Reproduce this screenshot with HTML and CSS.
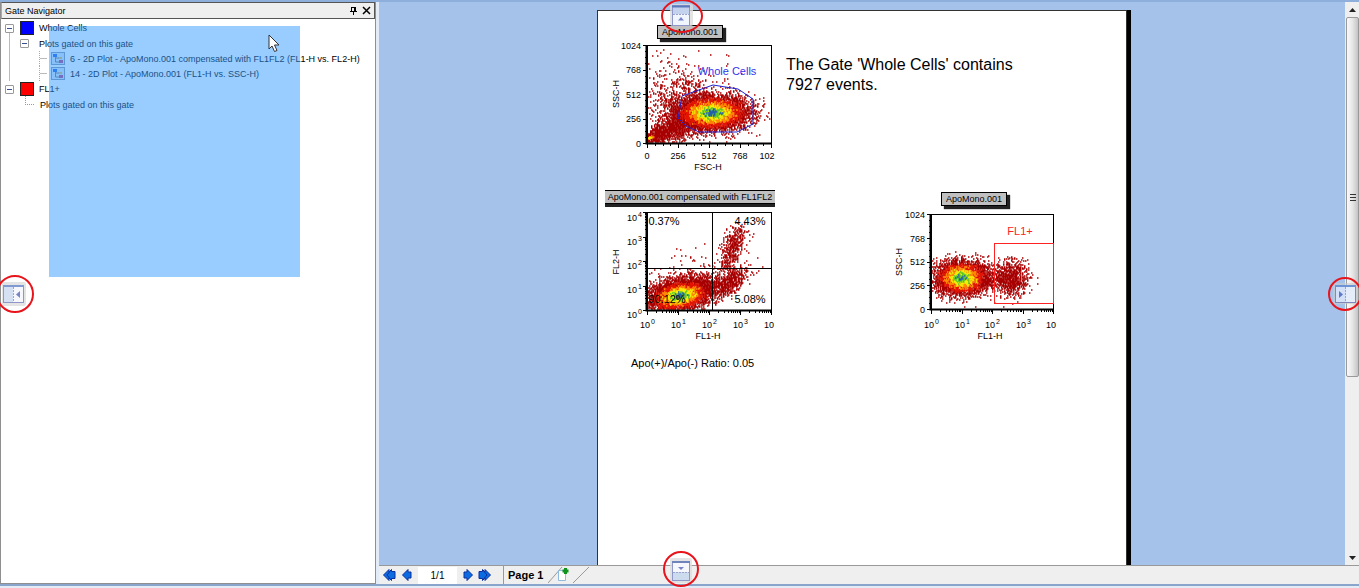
FILE: index.html
```html
<!DOCTYPE html>
<html lang="en">

<head>
    <meta charset="UTF-8">
    <meta name="viewport" content="width=device-width, initial-scale=1.0">
    <title>Gate Navigator</title>
    <link rel="stylesheet" href="styles.css">
</head>

<body>
    <div class="window">
        <div class="main">
            <aside class="navigator">
                <header class="caption">
                    <h1>Gate Navigator</h1>
                    <button aria-label="Auto hide">
                        <svg width="9" height="10" viewBox="0 0 9 10"><path d="M2.5 1v4M2 1.5h5M5.5 1v4M6.5 1v4M1 5.5h7M4.5 6v3" fill="none" stroke="#000"/></svg>
                    </button>
                    <button aria-label="Close">
                        <svg width="9" height="9" viewBox="0 0 9 9"><path d="M1 1l7 7M8 1L1 8" stroke="#000" stroke-width="1.5"/></svg>
                    </button>
                </header>
                <ul class="tree">
                    <li>
                        <div class="row gate"><button class="expander" aria-label="Collapse Whole Cells"></button><i class="swatch blue"></i>Whole Cells</div>
                        <ul>
                            <li>
                                <div class="row"><button class="expander" aria-label="Collapse plots"></button>Plots gated on this gate</div>
                                <ul class="plots">
                                    <li class="row"><svg class="plot-icon" viewBox="0 0 14 13"><use href="#plot-icon"/></svg>6 - 2D Plot - ApoMono.001 compensated with FL1FL2 (FL1-H vs. FL2-H)</li>
                                    <li class="row"><svg class="plot-icon" viewBox="0 0 14 13"><use href="#plot-icon"/></svg>14 - 2D Plot - ApoMono.001 (FL1-H vs. SSC-H)</li>
                                </ul>
                            </li>
                        </ul>
                    </li>
                    <li>
                        <div class="row gate"><button class="expander" aria-label="Collapse FL1+"></button><i class="swatch red"></i>FL1+</div>
                        <ul>
                            <li class="row leaf">Plots gated on this gate</li>
                        </ul>
                    </li>
                </ul>
            </aside>

            <main class="workspace">
                <div class="view">
                    <div class="canvas">
                        <article class="page">
                            <figure>
                                <figcaption class="tag">ApoMono.001</figcaption>
                                <svg class="plot" id="plot-ssc" width="170" height="134" viewBox="0 0 170 134">
                                    <g class="dots"></g>
                                    <rect class="frame" x="42" y="4" width="124" height="98"/>
                                    <path class="axis" d="M41.5 4v98.5H166"/>
                                    <path class="ticks"/>
                                    <path class="gate-blue" d="M77 55L108 44L133 48L148 58V83L132 91H94L81 85L73 77Z"/>
                                    <text class="label blue-text" x="122" y="34">Whole Cells</text>
                                    <g class="y-labels">
                                        <text x="36" y="8">1024</text>
                                        <text x="36" y="32">768</text>
                                        <text x="36" y="57">512</text>
                                        <text x="36" y="81">256</text>
                                        <text x="36" y="106">0</text>
                                    </g>
                                    <g class="x-labels">
                                        <text x="42" y="118">0</text>
                                        <text x="73" y="118">256</text>
                                        <text x="104" y="118">512</text>
                                        <text x="135" y="118">768</text>
                                        <text x="162" y="118">102</text>
                                        <text x="103" y="129">FSC-H</text>
                                        <text transform="translate(14 53) rotate(-90)">SSC-H</text>
                                    </g>
                                </svg>
                            </figure>

                            <p class="gate-note">The Gate 'Whole Cells' contains 7927 events.</p>

                            <figure>
                                <figcaption class="tag wide">ApoMono.001 compensated with FL1FL2</figcaption>
                                <svg class="plot" id="plot-fl" width="170" height="136" viewBox="0 0 170 136">
                                    <g class="dots"></g>
                                    <rect class="frame" x="42" y="6" width="124" height="98"/>
                                    <path class="axis" d="M41.5 6v98.5H166"/>
                                    <path class="ticks"/>
                                    <path class="quadrants" d="M107 6v98M42 62.5h124"/>
                                    <text class="label" x="59" y="19">0.37%</text>
                                    <text class="label" x="145" y="19">4.43%</text>
                                    <text class="label" x="62" y="97">90.12%</text>
                                    <text class="label" x="145" y="97">5.08%</text>
                                    <g class="y-labels">
                                        <text x="32" y="15">10</text><text class="sup" x="37" y="11">4</text>
                                        <text x="32" y="39">10</text><text class="sup" x="37" y="35">3</text>
                                        <text x="32" y="63">10</text><text class="sup" x="37" y="59">2</text>
                                        <text x="32" y="87">10</text><text class="sup" x="37" y="83">1</text>
                                        <text x="32" y="112">10</text><text class="sup" x="37" y="108">0</text>
                                    </g>
                                    <g class="x-labels">
                                        <text x="40" y="122">10</text><text class="sup" x="48" y="118">0</text>
                                        <text x="71" y="122">10</text><text class="sup" x="79" y="118">1</text>
                                        <text x="102" y="122">10</text><text class="sup" x="110" y="118">2</text>
                                        <text x="133" y="122">10</text><text class="sup" x="141" y="118">3</text>
                                        <text x="164" y="122">10</text>
                                        <text x="103" y="133">FL1-H</text>
                                        <text transform="translate(14 56) rotate(-90)">FL2-H</text>
                                    </g>
                                </svg>
                            </figure>

                            <figure class="second">
                                <figcaption class="tag">ApoMono.001</figcaption>
                                <svg class="plot" id="plot-fl1" width="170" height="134" viewBox="0 2 170 134">
                                    <g class="dots"></g>
                                    <rect class="frame" x="42" y="8" width="122" height="95"/>
                                    <path class="axis" d="M41.5 8v95.5H165"/>
                                    <path class="ticks"/>
                                    <rect class="gate-red" x="105" y="37" width="59" height="60"/>
                                    <text class="label red-text" x="131" y="29">FL1+</text>
                                    <g class="y-labels">
                                        <text x="36" y="12">1024</text>
                                        <text x="36" y="36">768</text>
                                        <text x="36" y="59">512</text>
                                        <text x="36" y="83">256</text>
                                        <text x="36" y="107">0</text>
                                    </g>
                                    <g class="x-labels">
                                        <text x="40" y="122">10</text><text class="sup" x="48" y="118">0</text>
                                        <text x="71" y="122">10</text><text class="sup" x="79" y="118">1</text>
                                        <text x="101" y="122">10</text><text class="sup" x="109" y="118">2</text>
                                        <text x="132" y="122">10</text><text class="sup" x="140" y="118">3</text>
                                        <text x="162" y="122">10</text>
                                        <text x="101" y="133">FL1-H</text>
                                        <text transform="translate(13 56) rotate(-90)">SSC-H</text>
                                    </g>
                                </svg>
                            </figure>

                            <p class="ratio">Apo(+)/Apo(-) Ratio: 0.05</p>
                        </article>
                    </div>
                    <div class="scrollbar">
                        <button aria-label="Scroll up"><svg width="7" height="4" viewBox="0 0 7 4"><path d="M0 4L3.5 0L7 4Z" fill="#222"/></svg></button>
                        <div class="thumb"><svg width="6" height="8" viewBox="0 0 6 8"><path d="M0 1.5h6M0 4.5h6M0 7.5h6" stroke="#333"/></svg></div>
                        <button class="down" aria-label="Scroll down"><svg width="7" height="4" viewBox="0 0 7 4"><path d="M0 0h7L3.5 4Z" fill="#222"/></svg></button>
                    </div>
                </div>

                <nav class="pager">
                    <button aria-label="First page"><svg width="13" height="12" viewBox="0 0 13 12"><path d="M.5 6L6 .5V3L8.500 .5V2.500H12V9.500H8.500V11.500L6 9V11.500Z" fill="#0c6be0" stroke="#0a2f9e"/><path d="M7 2.500L4 6L7 9.500" fill="none" stroke="#0a2f9e"/></svg></button>
                    <button aria-label="Previous page"><svg width="10" height="12" viewBox="0 0 10 12"><path d="M.5 6L6 .5V3H9V9H6V11.500Z" fill="#0c6be0" stroke="#0a2f9e"/></svg></button>
                    <input type="text" value="1/1" aria-label="Page number">
                    <button aria-label="Next page"><svg width="10" height="12" viewBox="0 0 10 12"><path d="M9.500 6L4 .5V3H1V9H4V11.500Z" fill="#0c6be0" stroke="#0a2f9e"/></svg></button>
                    <button aria-label="Last page"><svg width="13" height="12" viewBox="0 0 13 12"><path d="M12.500 6L7 .5V3L4.500 .5V2.500H1V9.500H4.500V11.500L7 9V11.500Z" fill="#0c6be0" stroke="#0a2f9e"/><path d="M6 2.500L9 6L6 9.500" fill="none" stroke="#0a2f9e"/></svg></button>
                    <button class="tab">Page 1</button>
                    <button class="new-page" aria-label="New page">
                        <svg width="44" height="18" viewBox="0 0 44 18">
                            <path d="M0 17L14 1M25 17L41 1" fill="none" stroke="#9a9a9a"/>
                            <path d="M10.500 4.500h7v10h-7z" fill="#fff" stroke="#8fbbe0"/>
                            <path d="M17.500 2v6M14.500 5h6" stroke="#10931c" stroke-width="3"/>
                        </svg>
                    </button>
                </nav>
            </main>
        </div>
        <footer class="status"></footer>

        <div class="drag-area"></div>
        <svg class="cursor" width="12" height="19" viewBox="0 0 12 19"><path d="M1 1V15L4 12L6.500 17.500L9 16.500L6.500 11H11Z" fill="#fff" stroke="#333"/></svg>

        <svg class="dock dock-top" width="44" height="36" viewBox="0 0 44 36">
            <rect x="10" y="5" width="23" height="22" rx="2" fill="#ddd" opacity=".8"/>
            <rect x="12.500" y="6.500" width="17" height="20" fill="#f1f5fd" stroke="#8f96c8"/>
            <path d="M13 7h16v8H13z" fill="#c5d2ee"/><path d="M12 7.500h18" stroke="#5b79bd" stroke-width="2"/>
            <path d="M13 15.500h16" stroke="#9aa4cd" stroke-dasharray="2 1"/>
            <path d="M18 21.500L21 18L24 21.500Z" fill="#7886c9"/>
            <ellipse cx="22" cy="17" rx="20" ry="16"/>
        </svg>
        <svg class="dock dock-left" width="40" height="40" viewBox="0 0 40 40">
            <rect x="7" y="8" width="24" height="24" rx="2" fill="#ddd" opacity=".8"/>
            <rect x="8.500" y="11.500" width="20" height="17" fill="#f6f8fd" stroke="#8f96c8"/>
            <path d="M9 12h9v16H9z" fill="#d5e0f3"/><path d="M8 12h21" stroke="#7f9bd2" stroke-width="2"/>
            <path d="M18.500 13v15" stroke="#9aa4cd" stroke-dasharray="2 1"/>
            <path d="M25 17V24L21 20.500Z" fill="#7886c9"/>
            <circle cx="20" cy="20" r="18"/>
        </svg>
        <svg class="dock dock-right" width="36" height="36" viewBox="0 0 36 36">
            <rect x="6" y="7" width="23" height="21" rx="2" fill="#ccc" opacity=".6"/>
            <rect x="8.500" y="9.500" width="20" height="17" fill="#d3e0f7" stroke="#8087bd"/>
            <path d="M19 10h9v16h-9z" fill="#e4edf9"/><path d="M8 10h21" stroke="#6f94d5" stroke-width="2"/>
            <path d="M18.500 11v15" stroke="#9aa4cd" stroke-dasharray="2 1"/>
            <path d="M12 15V22L16 18.500Z" fill="#5f76c9"/>
            <circle cx="18" cy="18" r="16"/>
        </svg>
        <svg class="dock dock-bottom" width="38" height="38" viewBox="0 0 38 38">
            <rect x="8" y="8" width="22" height="25" rx="2" fill="#ddd" opacity=".8"/>
            <rect x="10.500" y="11.500" width="17" height="19" fill="#f6f8fd" stroke="#8f96c8"/>
            <path d="M11 22h16v8H11z" fill="#cddbef"/><path d="M10 12h18" stroke="#6f83bd" stroke-width="2"/>
            <path d="M11 22.500h16" stroke="#9aa4cd" stroke-dasharray="2 1"/>
            <path d="M16 17h6L19 20Z" fill="#7886c9"/>
            <circle cx="19" cy="19" r="17"/>
        </svg>
    </div>

    <svg class="defs" width="0" height="0" aria-hidden="true">
        <symbol id="plot-icon" viewBox="0 0 14 13">
            <rect x=".5" y=".5" width="13" height="12" fill="#dce6f4" stroke="#8797ad"/>
            <path d="M4.500 4v6H8M4.500 6H8" fill="none" stroke="#777"/>
            <path d="M2 2h4v3H2z" fill="#2966e0"/>
            <path d="M8 5h3v2H8z" fill="#e2c044"/>
            <path d="M8 8h4v3H8z" fill="#b8447f"/>
        </symbol>
    </svg>

    <script src="plots.js"></script>
</body>

</html>
```
FILE: styles.css
```css
* {
    box-sizing: border-box;
}

body {
    margin: 0;
    font-family: "Liberation Sans", Arial, sans-serif;
    font-size: 11px;
    color: #000;
}

button {
    display: flex;
    align-items: center;
    justify-content: center;
    padding: 0;
    border: 0;
    background: none;
}

ul {
    list-style: none;
    margin: 0;
    padding: 0;
}

.window {
    position: relative;
    display: flex;
    flex-direction: column;
    height: 100vh;
    overflow: hidden;
    padding-top: 2px;
    background: linear-gradient(#8eafdc, #8eafdc) top / 100% 2px no-repeat #e3ebf7;
}

.main {
    flex: 1;
    display: flex;
    gap: 3px;
    min-height: 0;
}

/* Gate navigator */

.navigator {
    flex: 0 0 376px;
    min-width: 0;
    border: 1px solid #8f8f8f;
    border-top: 0;
    background: #fff;
    font-size: 9px;
}

.caption {
    display: flex;
    align-items: center;
    gap: 4px;
    height: 17px;
    padding: 0 3px;
    border: 1px solid #555;
    border-left-color: #aaa;
    background: #efefef;
}

.caption h1 {
    flex: 1;
    margin: 0;
    font-size: 9px;
    font-weight: normal;
}

.tree {
    padding: 1px 0 0 3px;
}

.tree ul {
    padding-left: 16px;
}

.tree ul.plots {
    padding-left: 18px;
    margin-left: 12px;
}

.row {
    display: flex;
    align-items: center;
    height: 15px;
    padding-left: 3px;
    white-space: nowrap;
}

.row.gate {
    height: 16px;
    padding-left: 1px;
}

.tree ul .row {
    padding-left: 0;
}

.tree > li:first-child {
    background: linear-gradient(#bbb, #bbb) 5px 12px / 1px 100% no-repeat;
}

.expander {
    width: 9px;
    height: 9px;
    margin-right: 10px;
    border: 1px solid #999;
    border-radius: 1px;
    background: linear-gradient(#35508c, #35508c) center / 5px 1px no-repeat #fff;
}

.row.gate .expander {
    margin-right: 6px;
}

.swatch {
    width: 14px;
    height: 14px;
    margin-right: 5px;
    border: 1px solid #222;
}

.swatch.blue {
    background: #00f;
}

.swatch.red {
    background: #f00;
}

.plots .row::before {
    content: "";
    width: 7px;
    height: 15px;
    margin: 0 4px 0 -11px;
    border-left: 1px dotted #aaa;
    background: linear-gradient(#bbb, #bbb) center / 100% 1px no-repeat;
}

.plot-icon {
    width: 14px;
    height: 13px;
    margin-right: 5px;
}

.leaf::before {
    content: "";
    width: 8px;
    height: 8px;
    margin: 0 6px 8px 5px;
    border-left: 1px dotted #999;
    border-bottom: 1px dotted #999;
}

/* Report page */

.workspace {
    flex: 1;
    display: flex;
    flex-direction: column;
    min-width: 0;
}

.view {
    flex: 1;
    display: flex;
    min-height: 0;
}

.canvas {
    flex: 1;
    display: flex;
    justify-content: center;
    overflow: hidden;
    padding-top: 8px;
    background: #a4c2ea;
}

.page {
    display: grid;
    grid-template-columns: 181px 103px 1fr;
    align-content: start;
    row-gap: 15px;
    width: 530px;
    padding: 14px 0 0 7px;
    border: 1px solid #333;
    border-bottom: 0;
    background: #fff;
    box-shadow: 4px 0 #000;
}

figure {
    display: flex;
    flex-direction: column;
    align-items: center;
    justify-content: flex-end;
    gap: 2px;
    width: 170px;
    margin: 0;
}

.second {
    grid-column: 3;
}

.tag {
    height: 14px;
    padding: 0 4px;
    border: 1px solid #000;
    background: #c0c0c0;
    box-shadow: 3px 3px 1px #222;
    font-size: 9px;
    line-height: 12px;
    white-space: nowrap;
}

.tag.wide {
    width: 100%;
    padding: 0;
    border-width: 1px 0;
    box-shadow: 0 3px #222;
    text-align: center;
}

.gate-note {
    grid-column: 2 / 4;
    max-width: 240px;
    margin: 0;
    padding-top: 30px;
    font-size: 16px;
    line-height: 20px;
}

.ratio {
    grid-column: 1;
    margin: 0;
    padding-left: 26px;
    line-height: 13px;
    white-space: nowrap;
}

.plot {
    display: block;
    font-size: 9px;
}

.frame,
.gate-blue,
.gate-red,
.axis,
.ticks,
.quadrants {
    fill: none;
    stroke: #000;
}

.frame,
.ticks,
.quadrants,
.gate-red {
    shape-rendering: crispEdges;
}

.axis {
    stroke-width: 2px;
}

.gate-blue {
    stroke: #22c;
}

.gate-red {
    stroke: #f22;
}

.label {
    font-size: 11px;
    text-anchor: middle;
}

.blue-text {
    fill: #33e;
}

.red-text {
    fill: #f22;
}

.y-labels {
    text-anchor: end;
}

.x-labels {
    text-anchor: middle;
}

.sup {
    font-size: 7px;
}

.scrollbar {
    display: flex;
    flex-direction: column;
    width: 14px;
    background: #efefef;
}

.scrollbar button {
    height: 15px;
}

.scrollbar .down {
    margin-top: auto;
}

.thumb {
    display: flex;
    align-items: center;
    justify-content: center;
    flex: 0 0 64%;
    margin-left: 1px;
    border: 1px solid #999;
    border-radius: 2px;
    background: linear-gradient(90deg, #fafafa, #e6e6e6 50%, #c4c4c8);
}

/* Page navigation */

.pager {
    display: flex;
    align-items: center;
    height: 19px;
    padding-left: 4px;
    border-top: 1px solid #999;
    background: #efefef;
}

.pager button {
    flex: none;
    min-width: 13px;
    margin-right: 4px;
}

.pager input {
    width: 39px;
    height: 17px;
    margin: 0 4px 0 1px;
    padding: 0;
    border: 0;
    background: #fff;
    font: 10px "Liberation Sans", Arial, sans-serif;
    text-align: center;
}

.pager .tab {
    height: 18px;
    margin: 0 0 0 8px;
    padding: 0 5px 0 4px;
    border-left: 1px solid #999;
    font: bold 11px "Liberation Sans", Arial, sans-serif;
}

.status {
    height: 4px;
    border-top: 2px solid #8aa5cb;
}

/* Docking overlay */

.drag-area {
    position: absolute;
    left: 49px;
    top: 26px;
    width: 251px;
    height: 251px;
    background: rgba(51, 153, 255, 0.5);
}

.cursor {
    position: absolute;
    left: 268px;
    top: 34px;
}

.dock {
    position: absolute;
}

.dock circle,
.dock ellipse {
    fill: none;
    stroke: #e8141c;
    stroke-width: 2px;
}

.dock-top {
    left: 50%;
    top: -1px;
    margin-left: -20px;
}

.dock-left {
    left: -5px;
    top: 50%;
    margin-top: -20px;
}

.dock-right {
    right: -4px;
    top: 50%;
    margin-top: -18px;
}

.dock-bottom {
    left: 50%;
    bottom: 0;
    margin-left: -18px;
}

.defs {
    display: none;
}
```
FILE: plots.js
```js
let seed = 7;

function rand() {
    seed = (seed * 16807) % 2147483647;
    return seed / 2147483647;
}

function gauss() {
    return Math.sqrt(-2 * Math.log(rand() || 0.5)) * Math.cos(2 * Math.PI * rand());
}

const colors = ["#a80000", "#e41400", "#ff8a00", "#f4f000", "#58c828", "#2060a8"];
// distance from the cluster centre where each colour starts
const limits = [1.7, 1.2, 0.85, 0.5, 0.25];

function level(r) {
    const d = r + gauss() * 0.2;
    let n = 0;
    while (n < limits.length && d < limits[n]) n++;
    return n;
}

// top is the hottest colour a cluster can reach
function drawDots(id, box, clusters) {
    const cells = new Map();
    clusters.forEach(c => {
        for (let i = 0; i < c.n; i++) {
            const a = gauss();
            const b = gauss();
            const x = Math.round(c.x + a * c.sx);
            const y = Math.round(c.y + b * c.sy + a * c.tilt);
            if (x < box[0] || x > box[2] || y < box[1] || y > box[3]) continue;
            cells.set(`${x} ${y}`, c.top ? Math.min(c.top, level(Math.hypot(a, b))) : 0);
        }
    });
    const paths = colors.map(() => "");
    cells.forEach((n, at) => {
        paths[n] += `M${at}h1.5`;
    });
    const group = document.querySelector(`#${id} .dots`);
    paths.forEach((d, i) => {
        const path = document.createElementNS("http://www.w3.org/2000/svg", "path");
        path.setAttribute("d", d);
        path.setAttribute("stroke", colors[i]);
        path.setAttribute("stroke-width", 1.5);
        group.appendChild(path);
    });
}

function steps(log) {
    const list = [];
    for (let i = 0; i < 4; i++) {
        for (let k = 1; k < (log ? 10 : 5); k++) {
            list.push({ at: (i + (log ? Math.log10(k) : (k - 1) / 4)) / 4, major: k === 1 });
        }
    }
    list.push({ at: 1, major: true });
    return list;
}

function drawTicks(id, box, xLog, yLog) {
    let d = "";
    steps(xLog).forEach(t => {
        d += `M${Math.round(box[0] + t.at * (box[2] - box[0]))} ${box[3]}v${t.major ? 5 : 3}`;
    });
    steps(yLog).forEach(t => {
        d += `M${box[0]} ${Math.round(box[3] - t.at * (box[3] - box[1]))}h${t.major ? -4 : -2}`;
    });
    document.querySelector(`#${id} .ticks`).setAttribute("d", d);
}

drawDots("plot-ssc", [43, 6, 164, 101], [
    { x: 76, y: 54, sx: 26, sy: 19, tilt: 3, n: 480 },
    { x: 74, y: 70, sx: 12, sy: 15, tilt: -3, n: 480 },
    { x: 74, y: 84, sx: 15, sy: 8, tilt: -6, n: 1300 },
    { x: 50, y: 95, sx: 8, sy: 4, tilt: -3, n: 450 },
    { x: 43, y: 97, sx: 4, sy: 1, tilt: -1, n: 60, top: 3 },
    { x: 106, y: 72, sx: 17, sy: 8, tilt: 0, n: 7500, top: 5 }
]);
drawTicks("plot-ssc", [42, 4, 166, 102], false, false);

drawDots("plot-fl", [43, 8, 164, 103], [
    { x: 88, y: 68, sx: 16, sy: 14, tilt: -3, n: 90 },
    { x: 98, y: 79, sx: 14, sy: 5, tilt: 0, n: 450 },
    { x: 124, y: 48, sx: 6, sy: 9, tilt: -7, n: 330 },
    { x: 130, y: 36, sx: 6, sy: 8, tilt: -3, n: 200 },
    { x: 125, y: 76, sx: 9, sy: 6, tilt: -5, n: 500 },
    { x: 75, y: 84, sx: 15, sy: 8, tilt: -1, n: 900 },
    { x: 74, y: 90, sx: 14, sy: 7, tilt: -2, n: 5500, top: 5 }
]);
drawTicks("plot-fl", [42, 6, 166, 104], true, true);

drawDots("plot-fl1", [43, 10, 162, 102], [
    { x: 100, y: 73, sx: 10, sy: 5, tilt: 0, n: 260 },
    { x: 122, y: 72, sx: 8, sy: 9, tilt: 0, n: 850 },
    { x: 73, y: 71, sx: 14, sy: 9, tilt: 0, n: 600 },
    { x: 72, y: 72, sx: 12, sy: 8, tilt: 0, n: 4200, top: 5 }
]);
drawTicks("plot-fl1", [42, 8, 164, 103], true, false);
```
